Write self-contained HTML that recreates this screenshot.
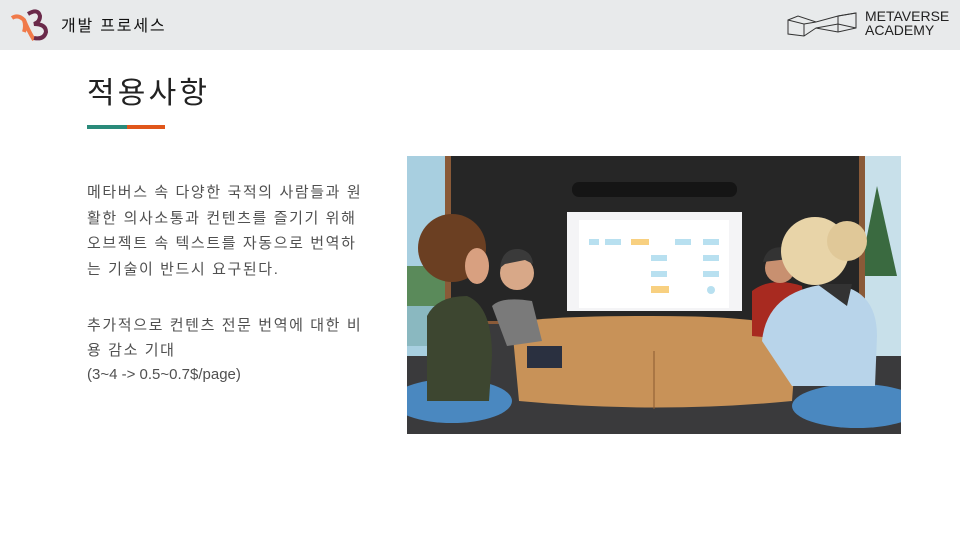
<!DOCTYPE html>
<html><head><meta charset="utf-8"><style>
*{margin:0;padding:0;box-sizing:border-box}
body{width:960px;height:540px;background:#fff;position:relative;overflow:hidden;font-family:"Liberation Sans","Noto Sans CJK KR",sans-serif}
.hdr{position:absolute;left:0;top:0;width:960px;height:50px;background:#e8eaeb}
.ht{position:absolute;left:61px;top:12px;font-size:16px;color:#111;letter-spacing:1.8px}
.title{position:absolute;left:87px;top:68px;font-size:30px;color:#222;letter-spacing:3.2px}
.bar1{position:absolute;left:87px;top:125px;width:40px;height:4px;background:#2a8a7a}
.bar2{position:absolute;left:127px;top:125px;width:38px;height:4px;background:#e0561a}
.txt{position:absolute;left:87px;font-size:15px;color:#505050;line-height:25.7px;letter-spacing:1.6px;white-space:nowrap}
.ma{position:absolute;left:865px;top:9px;font-size:14px;line-height:14px;color:#222;letter-spacing:0}
</style></head><body>
<div class="hdr"></div>
<svg style="position:absolute;left:10px;top:8px" width="44" height="34" viewBox="0 0 44 34">
<path d="M2 10 Q8 6 14 12 Q16 18 14 24" stroke="#f07a4a" stroke-width="4" fill="none"/>
<path d="M14 12 Q18 22 24 32" stroke="#f07a4a" stroke-width="4" fill="none"/>
<path d="M18 6 Q28 0 30 8 Q30 14 24 16 Q36 16 36 24 Q34 32 24 30" stroke="#6a2a4a" stroke-width="4" fill="none"/>
</svg>
<div class="ht">개발 프로세스</div>
<svg style="position:absolute;left:786px;top:10px" width="74" height="28" viewBox="0 0 74 28" fill="none" stroke="#333" stroke-width="1">
<path d="M2 10 L12 6 L30 12 L52 6 L70 3 L70 18 L52 22 L30 18 L18 26 L2 24 Z"/>
<path d="M2 10 L18 14 L18 26 M18 14 L30 12 M52 6 L52 22 M52 6 L70 3 M30 18 L52 14 L70 18"/>
</svg>
<div class="ma">METAVERSE<br>ACADEMY</div>
<div class="title">적용사항</div>
<div class="bar1"></div><div class="bar2"></div>
<div class="txt" style="top:180px">메타버스 속 다양한 국적의 사람들과 원<br>활한 의사소통과 컨텐츠를 즐기기 위해<br>오브젝트 속 텍스트를 자동으로 번역하<br>는 기술이 반드시 요구된다.</div>
<div class="txt" style="top:314px;line-height:24.5px">추가적으로 컨텐츠 전문 번역에 대한 비<br>용 감소 기대<br><span style="letter-spacing:0">(3~4 -&gt; 0.5~0.7$/page)</span></div>
<svg style="position:absolute;left:407px;top:156px" width="494" height="278" viewBox="0 0 494 278">
<rect width="494" height="278" fill="#3a3a3c"/>
<rect x="0" y="0" width="40" height="200" fill="#a8cfe0"/>
<rect x="0" y="110" width="40" height="60" fill="#5a8a5a"/>
<rect x="0" y="150" width="40" height="40" fill="#8ab8c0"/>
<rect x="455" y="0" width="39" height="200" fill="#c8e0ea"/>
<path d="M470 30 L490 120 L452 120 Z" fill="#3a6a40"/>
<rect x="38" y="0" width="420" height="168" fill="#8a5a38"/>
<rect x="44" y="0" width="408" height="165" fill="#262626"/>
<rect x="165" y="26" width="165" height="15" rx="7" fill="#151515"/>
<rect x="160" y="56" width="175" height="99" fill="#f4f4f6"/>
<rect x="172" y="64" width="150" height="88" fill="#fff"/>
<rect x="182" y="83" width="10" height="6" fill="#b8e0f0"/><rect x="198" y="83" width="16" height="6" fill="#b8e0f0"/>
<rect x="224" y="83" width="18" height="6" fill="#f8d080"/><rect x="268" y="83" width="16" height="6" fill="#b8e0f0"/><rect x="296" y="83" width="16" height="6" fill="#b8e0f0"/>
<rect x="244" y="99" width="16" height="6" fill="#b8e0f0"/><rect x="296" y="99" width="16" height="6" fill="#b8e0f0"/>
<rect x="244" y="115" width="16" height="6" fill="#b8e0f0"/><rect x="296" y="115" width="16" height="6" fill="#b8e0f0"/>
<rect x="244" y="130" width="18" height="7" fill="#f8d080"/><circle cx="304" cy="134" r="4" fill="#b8e0f0"/>
<path d="M230 190 L245 168 L265 168 L275 190 Z" fill="#333"/>
<path d="M105 170 Q110 160 245 160 Q385 160 390 180 L385 245 Q250 258 112 245 Z" fill="#c89258"/>
<line x1="247" y1="195" x2="247" y2="253" stroke="#8a5a30" stroke-width="1"/>
<rect x="120" y="190" width="35" height="22" fill="#2a3040"/>
<ellipse cx="45" cy="245" rx="60" ry="22" fill="#4a88c0"/>
<ellipse cx="450" cy="250" rx="65" ry="22" fill="#4a88c0"/>
<path d="M20 160 Q30 140 60 140 Q85 150 85 200 L82 245 L20 245 Z" fill="#3d4630"/>
<circle cx="45" cy="92" r="34" fill="#6b3f22"/>
<ellipse cx="70" cy="110" rx="12" ry="18" fill="#d8a080"/>
<path d="M85 150 Q95 140 125 145 L135 185 L100 190 Z" fill="#7a7a7a"/>
<circle cx="110" cy="117" r="17" fill="#d8a888"/>
<path d="M93 112 Q95 92 112 93 Q125 95 126 108 L118 104 L98 108 Z" fill="#3a3a3a"/>
<path d="M345 135 Q365 120 395 130 L400 185 L345 180 Z" fill="#a82a20"/>
<circle cx="373" cy="112" r="15" fill="#c89070"/>
<path d="M356 106 Q360 88 380 92 L390 102 Z" fill="#333"/>
<path d="M355 185 Q360 135 420 128 Q470 130 470 180 L468 230 L385 230 Z" fill="#b8d4ea"/>
<path d="M410 128 L445 128 L440 150 Z" fill="#333"/>
<circle cx="408" cy="95" r="34" fill="#e8d4a8"/>
<circle cx="440" cy="85" r="20" fill="#e0c898"/>
</svg>
</body></html>
